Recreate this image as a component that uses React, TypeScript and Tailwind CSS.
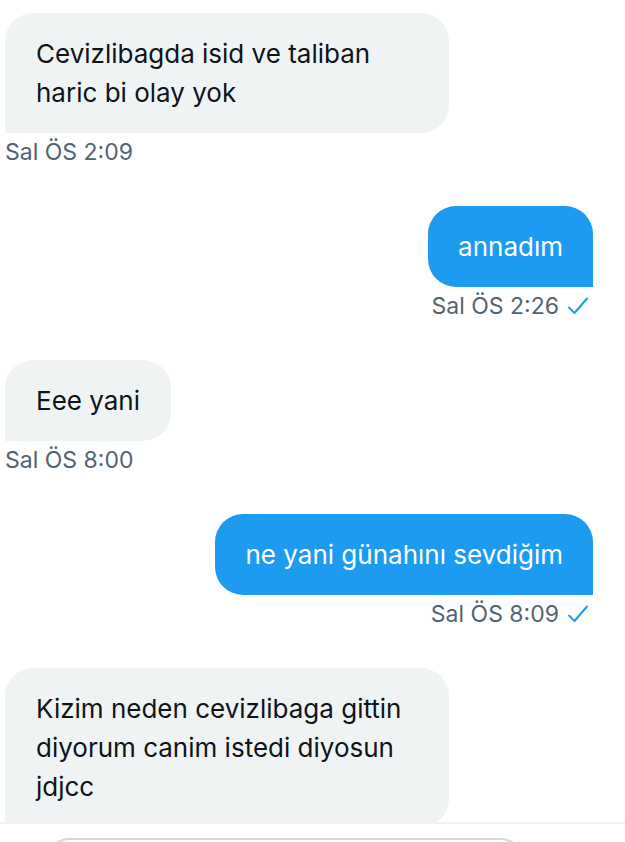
import React from "react";

type Msg = { side: "in" | "out"; text: string; time: string };

const msgs: Msg[] = [
  { side: "in", text: "Cevizlibagda isid ve taliban haric bi olay yok", time: "Sal ÖS 2:09" },
  { side: "out", text: "annadım", time: "Sal ÖS 2:26" },
  { side: "in", text: "Eee yani", time: "Sal ÖS 8:00" },
  { side: "out", text: "ne yani günahını sevdiğim", time: "Sal ÖS 8:09" },
  { side: "in", text: "Kizim neden cevizlibaga gittin diyorum canim istedi diyosun jdjcc", time: "" },
];

function Check() {
  return (
    <svg width="26" height="20" viewBox="0 0 26 20" className="ml-[8px]" fill="none">
      <path d="M2 11.5 L7.5 17 L20 2.5" stroke="#1d9bf0" strokeWidth="2" strokeLinecap="round" strokeLinejoin="round" />
    </svg>
  );
}

export default function App() {
  return (
    <div
      className="relative w-[625px] h-[842px] overflow-hidden bg-white"
      style={{ fontFamily: "Inter, 'Noto Sans', sans-serif" }}
    >
      <div className="flex flex-col pl-[5px] pr-[32px] pt-[13px]">
        {msgs.map((m, i) => (
          <div key={i} className={`flex flex-col ${m.side === "out" ? "items-end" : "items-start"} ${i < msgs.length - 1 ? "mb-[40px]" : ""}`}>
            <div
              className={
                m.side === "out"
                  ? "max-w-[444px] rounded-[28px] rounded-br-none bg-[#1d9bf0] text-white px-[30px] py-[21px] text-[26px] leading-[39px]"
                  : "max-w-[444px] rounded-[28px] rounded-bl-none bg-[#eff3f4] text-[#0f1419] px-[31px] py-[21px] text-[26px] leading-[39px]"
              }
            >
              {m.text}
            </div>
            {m.time && (
              <div className="mt-[5px] flex items-center text-[23px] leading-[28px] text-[#536471]">
                <span>{m.time}</span>
                {m.side === "out" && <Check />}
              </div>
            )}
          </div>
        ))}
      </div>
      <div className="absolute left-0 right-0 top-[822px] h-[20px] bg-white border-t-2 border-[#eff3f4]">
        <div className="mt-[14px] ml-[45px] w-[480px] h-[50px] rounded-full border-2 border-[#cfd9de]" />
      </div>
    </div>
  );
}
